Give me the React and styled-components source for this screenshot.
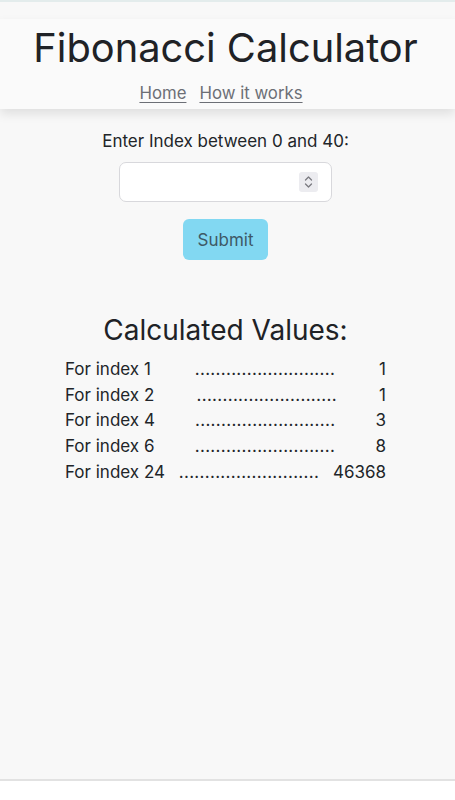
import React, { useState } from 'react';
import styled, { createGlobalStyle } from 'styled-components';

const GlobalStyle = createGlobalStyle`
  * {
    margin: 0;
    padding: 0;
    box-sizing: border-box;
  }

  body {
    font-family: 'Inter', 'Liberation Sans', sans-serif;
    background: #ffffff;
    color: #212529;
  }
`;

const Page = styled.div`
  height: 781px;
  background: #f8f8f8;
  border-top: 2px solid #e3ecec;
  border-bottom: 2px solid #e2e2e2;
  padding-top: 17px;
`;

const Header = styled.header`
  background: #fafafa;
  height: 90px;
  box-shadow: 0 5px 10px rgba(0, 0, 0, 0.1);
  text-align: center;
  padding: 3px 4px 0 0;
`;

const Title = styled.h1`
  font-size: 39.8px;
  font-weight: 400;
  line-height: 52px;
  color: #202226;
`;

const Nav = styled.nav`
  display: flex;
  justify-content: center;
  gap: 13px;
  margin-top: 9px;
  padding-right: 9px;
`;

const NavLink = styled.a`
  font-size: 16.8px;
  color: #6c6f76;
  text-decoration: underline;
  text-underline-offset: 3px;
  cursor: pointer;
`;

const Main = styled.main`
  padding-right: 4px;
`;

const Form = styled.form`
  display: flex;
  flex-direction: column;
  align-items: center;
  padding-top: 21px;
`;

const Label = styled.label`
  font-size: 17px;
  line-height: 22px;
  color: #212529;
`;

const InputBox = styled.div`
  position: relative;
  margin-top: 10px;
  width: 213px;
  height: 40px;
  background: #ffffff;
  border: 1px solid #d8d8dc;
  border-radius: 7px;
`;

const Input = styled.input`
  width: 100%;
  height: 100%;
  border: none;
  background: transparent;
  border-radius: 7px;
  padding: 0 40px 0 12px;
  font-size: 17px;
  font-family: inherit;
  outline: none;
`;

const Spinner = styled.div`
  position: absolute;
  right: 13px;
  top: 9px;
  width: 19px;
  height: 20px;
  background: #ececf0;
  border-radius: 3px;
  display: flex;
  align-items: center;
  justify-content: center;
`;

const Button = styled.button`
  margin-top: 17px;
  width: 85px;
  height: 41px;
  border: none;
  border-radius: 6px;
  background: #82d8f2;
  color: #3e5966;
  font-size: 17px;
  font-family: inherit;
  cursor: pointer;
`;

const Results = styled.section`
  display: flex;
  flex-direction: column;
  align-items: center;
  margin-top: 53px;
`;

const SubTitle = styled.h2`
  font-size: 28px;
  font-weight: 400;
  line-height: 34px;
  color: #202226;
`;

const List = styled.div`
  width: 321px;
  margin-top: 10px;
  display: flex;
  flex-direction: column;
`;

const Row = styled.div`
  display: flex;
  justify-content: space-between;
  font-size: 17px;
  line-height: 25.7px;
  color: #212529;
`;

const Dots = styled.span`
  letter-spacing: 0.3px;
`;

const values = [
  [1, 1],
  [2, 1],
  [4, 3],
  [6, 8],
  [24, 46368],
];

const App = () => {
  const [index, setIndex] = useState('');

  return (
    <>
      <GlobalStyle />
      <Page>
        <Header>
          <Title>Fibonacci Calculator</Title>
          <Nav>
            <NavLink>Home</NavLink>
            <NavLink>How it works</NavLink>
          </Nav>
        </Header>

        <Main>
          <Form onSubmit={e => e.preventDefault()}>
            <Label>Enter Index between 0 and 40:</Label>
            <InputBox>
              <Input type="text" value={index} onChange={e => setIndex(e.target.value)} />
              <Spinner>
                <svg width="11" height="16" viewBox="0 0 11 16" fill="none" stroke="#7a7a80" strokeWidth="1.3" strokeLinecap="round" strokeLinejoin="round">
                  <path d="M2.5 6 L5.5 3 L8.5 6" />
                  <path d="M2.5 10 L5.5 13 L8.5 10" />
                </svg>
              </Spinner>
            </InputBox>
            <Button type="submit">Submit</Button>
          </Form>

          <Results>
            <SubTitle>Calculated Values:</SubTitle>
            <List>
              {values.map(([i, v]) => (
                <Row key={i}>
                  <span>For index {i}</span>
                  <Dots>...........................</Dots>
                  <span>{v}</span>
                </Row>
              ))}
            </List>
          </Results>
        </Main>
      </Page>
    </>
  );
};

export default App;
